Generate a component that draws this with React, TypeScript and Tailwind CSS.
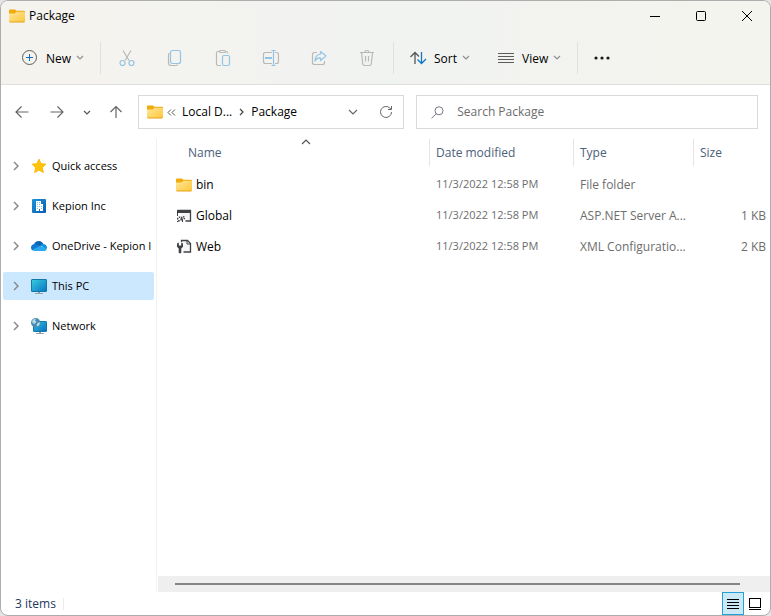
import React, { useState } from "react";

const crumbs = ["Local D...", "Package"];

const places = [
    { name: "Quick access", icon: <StarIcon /> },
    { name: "Kepion Inc", icon: <CompanyIcon /> },
    { name: "OneDrive - Kepion I", icon: <CloudIcon /> },
    { name: "This PC", icon: <MonitorIcon /> },
    { name: "Network", icon: <NetworkIcon /> },
];

const files = [
    { name: "bin", date: "11/3/2022 12:58 PM", type: "File folder", size: "", icon: <FolderIcon /> },
    { name: "Global", date: "11/3/2022 12:58 PM", type: "ASP.NET Server A...", size: "1 KB", icon: <ServerFileIcon /> },
    { name: "Web", date: "11/3/2022 12:58 PM", type: "XML Configuratio...", size: "2 KB", icon: <ConfigFileIcon /> },
];

function FolderIcon() {
    return (
        <svg width="16" height="14" viewBox="0 0 16 14" className="shrink-0">
            <defs>
                <linearGradient id="folder" x1="0" y1="0" x2="1" y2="1">
                    <stop offset="0" stopColor="#ffe79a" />
                    <stop offset="1" stopColor="#fdc73a" />
                </linearGradient>
            </defs>
            <path d="M0 1.2Q0 .5.8.5H6l1.4 1.3H14.8q1.2 0 1.2 1V7H0z" fill="#f0ab0c" />
            <path d="M0 4.4H5.8L7.4 2.8H15q1 0 1 .9V12.2q0 .8-.9.8H.9Q0 13 0 12.2z" fill="url(#folder)" />
            <path d="M.1 12.4H15.9q-.2 1-1 1H1.1q-.8 0-1-1z" fill="#e6a117" />
        </svg>
    );
}

function StarIcon() {
    return (
        <svg width="16" height="16" viewBox="0 0 16 16" className="shrink-0">
            <path d="M8 1.2l2 4.500 4.900.5-3.600 3.400 1 4.900L8 12.100l-4.300 2.400 1-4.900L1.100 6.200 6 5.700z" fill="#ffc50b" stroke="#fbb80a" strokeWidth="1" strokeLinejoin="round" />
        </svg>
    );
}

function CompanyIcon() {
    return (
        <svg width="16" height="16" viewBox="0 0 16 16" className="shrink-0">
            <defs>
                <linearGradient id="company" x1="0" y1="0" x2="1" y2="1">
                    <stop offset="0" stopColor="#1d94dd" />
                    <stop offset="1" stopColor="#0a5cb0" />
                </linearGradient>
            </defs>
            <rect x="1" y="1" width="14" height="14" rx="1" fill="url(#company)" />
            <path d="M5 3h5v3h2v7H9v-2H8v2H5z" fill="#fff" />
            <path d="M6 4h1v1H6zM8 4h1v1H8zM6 6h1v1H6zM8 6h1v1H8zM6 8h1v1H6zM8 8h1v1H8zM10 8h1v1h-1zM6 10h1v1H6zM10 10h1v1h-1z" fill="#8cc3e8" />
        </svg>
    );
}

function CloudIcon() {
    return (
        <svg width="16" height="16" viewBox="0 0 16 16" className="shrink-0">
            <path d="M3 6.200C4 3.800 6 2.800 8 2.900c2 .1 3.600 1.300 4.300 3.100L9 9z" fill="#0a64b5" />
            <path d="M3.200 6C1.200 6.200 0 7.700 0 9.500c0 1.200.5 2.100 1.300 2.700L9.500 8.500 6.500 6.600C5.500 6 4.300 5.800 3.200 6z" fill="#1078d0" />
            <path d="M12.300 6c-1.300-.1-2.300.4-3.100 1.100L14.800 11.500 16 10.300C16.300 8 14.600 6.100 12.300 6z" fill="#1490df" />
            <path d="M1.300 12.200L9 7.700l6.700 3.200c-.4 1.300-1.400 2.100-2.900 2.100H3.700c-1 0-1.800-.3-2.400-.8z" fill="#2aa8ee" />
        </svg>
    );
}

function MonitorIcon() {
    return (
        <svg width="16" height="16" viewBox="0 0 16 16" className="shrink-0">
            <defs>
                <linearGradient id="screen" x1="0" y1="0" x2="1" y2="1">
                    <stop offset="0" stopColor="#35d0dc" />
                    <stop offset="1" stopColor="#0c72c6" />
                </linearGradient>
            </defs>
            <path d="M7 13h2v2H7z" fill="#8f9aa3" />
            <path d="M4 15h8v1H4z" fill="#98a3ac" />
            <rect x=".5" y="1.500" width="15" height="12" rx=".5" fill="url(#screen)" stroke="#1479a8" />
        </svg>
    );
}

function NetworkIcon() {
    return (
        <svg width="16" height="16" viewBox="0 0 16 16" className="shrink-0">
            <defs>
                <linearGradient id="netscreen" x1="0" y1="0" x2="1" y2="1">
                    <stop offset="0" stopColor="#2fc4dd" />
                    <stop offset="1" stopColor="#0c6cc0" />
                </linearGradient>
            </defs>
            <path d="M8 13h2v2H8z" fill="#8f9aa3" />
            <path d="M5 15h8v1H5z" fill="#98a3ac" />
            <rect x="2.500" y="3.500" width="13" height="10" rx=".5" fill="url(#netscreen)" stroke="#1479a8" />
            <circle cx="4.700" cy="4.700" r="4.700" fill="#4a8db3" />
            <path d="M1.200 2.800Q3 .6 5 .5L4 2.500 5.500 3.600 3.500 6 1.500 5zM6.500 5l2.500-.8Q9 7 6.800 8.500L5.500 7z" fill="#b9d9e6" />
        </svg>
    );
}

function ServerFileIcon() {
    return (
        <svg width="16" height="16" viewBox="0 0 16 16" className="shrink-0">
            <path d="M1.500 2.500h13v10.500H9.500" fill="#f5f5f5" stroke="#3f4144" strokeWidth="1.300" />
            <path d="M1 2h14v3H1z" fill="#3f4144" />
            <path d="M1.500 4v4" stroke="#3f4144" />
            <circle cx="3.500" cy="11" r="1.800" fill="none" stroke="#3f4144" strokeWidth="1.500" strokeDasharray="1.500 .8" />
            <circle cx="7" cy="10" r="1.400" fill="none" stroke="#3f4144" strokeWidth="1.400" strokeDasharray="1.300 .7" />
            <path d="M6.500 12v2M1 13.500h1.500" stroke="#3f4144" />
        </svg>
    );
}

function ConfigFileIcon() {
    return (
        <svg width="16" height="16" viewBox="0 0 16 16" className="shrink-0">
            <path d="M5.500 3V1.500h6l3 3v8.500H7.500" fill="#f5f5f5" stroke="#3f4144" strokeWidth="1.300" />
            <path d="M11 1.500V5h3.500" fill="none" stroke="#3f4144" />
            <path d="M1 4.500L2.800 3.500v3h2.400v-3L7 4.500v3.300L5.300 9.500v4.300q-1.300 1-2.600 0V9.500L1 7.800z" fill="#3f4144" />
        </svg>
    );
}

function Chevron({ className, d = "M1 1l3 3 3-3", width = 8, height = 5 }: { className?: string; d?: string; width?: number; height?: number }) {
    return (
        <svg width={width} height={height} viewBox={`0 0 ${width} ${height}`} className={className} fill="none" stroke="currentColor" strokeWidth="1.200">
            <path d={d} />
        </svg>
    );
}

function ToolButton({ label, children }: { label: string; children: React.ReactNode }) {
    return (
        <button aria-label={label} className="flex h-10 w-12 items-center justify-center">
            <svg width="18" height="18" viewBox="0 0 18 18" fill="none" stroke="#b9b9b8" strokeWidth="1.200">{children}</svg>
        </button>
    );
}

function Divider() {
    return <div className="h-8 w-px bg-[#e0e1df]" />;
}

function TitleBar() {
    return (
        <div className="flex h-[29px] items-center">
            <div className="flex flex-1 items-center gap-1 pl-2">
                <FolderIcon />
                <h1>Package</h1>
            </div>
            <button aria-label="Minimize" className="flex h-full w-[46px] items-center justify-center">
                <svg width="12" height="12" viewBox="0 0 12 12" stroke="#000"><path d="M1 6.500h10" /></svg>
            </button>
            <button aria-label="Maximize" className="flex h-full w-[46px] items-center justify-center">
                <svg width="12" height="12" viewBox="0 0 12 12" fill="none" stroke="#000"><rect x="1.500" y="1.500" width="9" height="9" rx="1" /></svg>
            </button>
            <button aria-label="Close" className="flex h-full w-[46px] items-center justify-center">
                <svg width="12" height="12" viewBox="0 0 12 12" stroke="#000"><path d="M1 1l10 10M11 1L1 11" /></svg>
            </button>
        </div>
    );
}

function Toolbar() {
    return (
        <div className="flex h-[54px] items-center pt-px">
            <button className="flex h-10 w-[99px] items-center pl-5">
                <svg width="17" height="17" viewBox="0 0 17 17" fill="none">
                    <circle cx="8.500" cy="8.500" r="7" stroke="#5d5d5d" />
                    <path d="M8.500 5v7M5 8.500h7" stroke="#0f6cbd" />
                </svg>
                <span className="mt-0.5 ml-2">New</span>
                <Chevron className="ml-[5px] text-[#8f8f8f]" />
            </button>
            <Divider />
            <div className="mx-0.5 flex">
                <ToolButton label="Cut">
                    <path d="M5 1.500l6 10M13 1.500l-6 10" />
                    <circle cx="4.500" cy="14" r="2.500" stroke="#92c4e6" />
                    <circle cx="13.500" cy="14" r="2.500" stroke="#92c4e6" />
                </ToolButton>
                <ToolButton label="Copy">
                    <path d="M3.500 4Q2.500 4.500 2.500 6v8q0 2.500 2.500 2.500h5q1.300 0 1.800-1" />
                    <rect x="4.500" y="1.500" width="10" height="13" rx="2" stroke="#92c4e6" />
                </ToolButton>
                <ToolButton label="Paste">
                    <path d="M6 2.500H4Q2.500 2.500 2.500 4v11q0 1.500 1.500 1.500h3M11 2.500h1q1.500 0 1.500 1.500v.5" />
                    <rect x="5.500" y="1.500" width="6" height="2" rx="1" />
                    <rect x="8.500" y="6.500" width="7" height="10" rx="1.500" stroke="#92c4e6" />
                </ToolButton>
                <ToolButton label="Rename">
                    <path d="M10 3.500H3.500q-2 0-2 2v7q0 2 2 2H10M13 3.500h1.500q2 0 2 2v7q0 2-2 2H13" />
                    <path d="M9.500 1.500h4M11.500 1.500v15M9.500 16.500h4" stroke="#92c4e6" />
                    <path d="M3 9h7" stroke="#92c4e6" strokeWidth="2" />
                </ToolButton>
                <ToolButton label="Share">
                    <path d="M7 3.500H4.500q-2 0-2 2v8q0 2 2 2h8q2 0 2-2V12" />
                    <path d="M10.500 2.500l5.500 4.500-5.500 4.500V9Q7 8.500 5 12q0-6 5.500-7z" stroke="#92c4e6" strokeLinejoin="round" />
                </ToolButton>
                <ToolButton label="Delete">
                    <path d="M2 3.500h14M7 3.500Q7 1.500 9 1.500t2 2M3.500 3.500l1.200 11.300q.2 1.700 2 1.700h4.600q1.800 0 2-1.700L14.500 3.500M7.500 7v5.500M10.500 7v5.500" />
                </ToolButton>
            </div>
            <Divider />
            <button className="flex h-10 w-[88px] items-center pl-4">
                <svg width="17" height="16" viewBox="0 0 17 16" fill="none" strokeWidth="1.300">
                    <path d="M5 14V2.500M.5 7L5 2.500 9 6.500" stroke="#555" />
                    <path d="M11.500 2v11.500M7.500 9.500l4 4 4.500-4.500" stroke="#1377c8" />
                </svg>
                <span className="mt-0.5 ml-[7px]">Sort</span>
                <Chevron className="ml-[5px] text-[#8f8f8f]" />
            </button>
            <button className="flex h-10 w-[95px] items-center pl-4">
                <svg width="16" height="12" viewBox="0 0 16 12" stroke="#5c5c5c"><path d="M0 1.500h16M0 4.500h16M0 7.500h16M0 10.500h16" /></svg>
                <span className="mt-0.5 ml-2">View</span>
                <Chevron className="ml-[5px] text-[#8f8f8f]" />
            </button>
            <Divider />
            <button aria-label="See more" className="flex h-10 w-12 items-center justify-center">
                <svg width="18" height="4" viewBox="0 0 18 4" fill="#1a1a1a">
                    <circle cx="3" cy="2" r="1.600" /><circle cx="9" cy="2" r="1.600" /><circle cx="15" cy="2" r="1.600" />
                </svg>
            </button>
        </div>
    );
}

function AddressBar() {
    const [search, setSearch] = useState("");

    return (
        <div className="flex items-center py-[10px] pr-3 pl-3.5">
            <button aria-label="Back">
                <svg width="14" height="14" viewBox="0 0 14 14" fill="none" stroke="#666" strokeWidth="1.200"><path d="M13.500 7H1.500M6.500 1.500L1 7l5.500 5.500" /></svg>
            </button>
            <button aria-label="Forward" className="ml-[21px]">
                <svg width="14" height="14" viewBox="0 0 14 14" fill="none" stroke="#666" strokeWidth="1.200"><path d="M.5 7h12M7.500 1.500L13 7l-5.500 5.500" /></svg>
            </button>
            <button aria-label="Recent locations" className="ml-[19px]">
                <Chevron className="text-[#555]" />
            </button>
            <button aria-label="Up" className="ml-[18px]">
                <svg width="14" height="14" viewBox="0 0 14 14" fill="none" stroke="#666" strokeWidth="1.200"><path d="M7 13V1.500M1.500 7L7 1.500 12.500 7" /></svg>
            </button>
            <nav className="ml-[15px] flex h-[34px] flex-7 items-center border border-[#d9d9d9]">
                <span className="ml-2 shrink-0"><FolderIcon /></span>
                <svg width="9" height="7" viewBox="0 0 9 7" className="ml-1 shrink-0" fill="none" stroke="#555"><path d="M4 .5l-3 3 3 3M8 .5l-3 3 3 3" /></svg>
                <a href="#" className="ml-1.5 whitespace-nowrap">{crumbs[0]}</a>
                <Chevron width={5} height={8} d="M1 1l3 3-3 3" className="mx-[7px] shrink-0 text-[#444]" />
                <a href="#" className="flex-1">{crumbs[1]}</a>
                <button aria-label="Previous locations">
                    <Chevron width={10} height={6} d="M1 1l4 4 4-4" className="text-[#666]" />
                </button>
                <button aria-label="Refresh" className="mr-2.5 ml-[21px]">
                    <svg width="14" height="14" viewBox="0 0 14 14" fill="none" stroke="#666"><path d="M12.500 7A5.500 5.500 0 1 1 10.800 3L12 4.200M12.500 1v3.500H9" /></svg>
                </button>
            </nav>
            <label className="ml-3 flex h-[34px] flex-9 items-center border border-[#d9d9d9]">
                <svg width="13" height="13" viewBox="0 0 13 13" className="ml-3.5 shrink-0" fill="none" stroke="#7d7486"><circle cx="8" cy="4.800" r="4" /><path d="M5.200 7.700L.5 12.400" /></svg>
                <input
                    aria-label="Search Package"
                    placeholder="Search Package"
                    className="ml-[13px] min-w-0 flex-1 outline-none placeholder:text-[#6b6b6b]"
                    value={search}
                    onChange={(event) => setSearch(event.target.value)}
                />
            </label>
        </div>
    );
}

function Sidebar({ selected, onSelect }: { selected: string; onSelect: (name: string) => void }) {
    return (
        <nav className="flex w-[156px] shrink-0 flex-col gap-3 border-r border-[#f1f1f1] pt-[13px] pr-0.5 pl-0.5 text-[11px]">
            {places.map((place) => (
                <a
                    key={place.name}
                    href="#"
                    onClick={() => onSelect(place.name)}
                    className={`flex h-7 items-center overflow-hidden rounded-xs pl-2.5 whitespace-nowrap ${place.name === selected ? "bg-[#cce8ff]" : ""}`}
                >
                    <svg width="6" height="10" viewBox="0 0 6 10" className="mr-3 shrink-0" fill="none" stroke="#8a8a8a" strokeWidth="1.500"><path d="M1 1l4 4-4 4" /></svg>
                    {place.icon}
                    <span className="ml-[5px]">{place.name}</span>
                </a>
            ))}
        </nav>
    );
}

function FileTable() {
    return (
        <table className="w-full table-fixed text-left text-[#6d6d6d]">
            <thead className="text-[#4c607a]">
                <tr className="h-[30px] align-top">
                    <th className="w-[272px] p-0 font-normal">
                        <div className="flex h-[27px] items-center pl-[31px]">
                            <button>Name</button>
                            <Chevron width={10} height={6} d="M1 5l4-4 4 4" className="mb-[21px] ml-[79px] text-[#555]" />
                        </div>
                    </th>
                    <th className="w-36 p-0 font-normal">
                        <div className="flex h-[27px] items-center border-l border-[#e5e5e5] pl-1.5"><button>Date modified</button></div>
                    </th>
                    <th className="w-[120px] p-0 font-normal">
                        <div className="flex h-[27px] items-center border-l border-[#e5e5e5] pl-1.5"><button>Type</button></div>
                    </th>
                    <th className="p-0 font-normal">
                        <div className="flex h-[27px] items-center border-l border-[#e5e5e5] pl-1.5"><button>Size</button></div>
                    </th>
                </tr>
            </thead>
            <tbody>
                {files.map((file) => (
                    <tr key={file.name} className="h-[31px]">
                        <td className="p-0 text-black">
                            <div className="flex items-center gap-1 pl-[19px]">
                                {file.icon}
                                <span>{file.name}</span>
                            </div>
                        </td>
                        <td className="p-0 pl-[7px] text-[11px] whitespace-nowrap">{file.date}</td>
                        <td className="p-0 pl-[7px] whitespace-nowrap">{file.type}</td>
                        <td className="p-0 pr-1 text-right whitespace-nowrap">{file.size}</td>
                    </tr>
                ))}
            </tbody>
        </table>
    );
}

function StatusBar() {
    return (
        <footer className="flex h-[23px] items-center pl-3.5 text-[#1e395b]">
            <span>{files.length} items</span>
            <div className="ml-[7px] h-3 w-px bg-[#ececec]" />
            <div className="flex-1" />
            <button aria-label="Details view" className="flex h-[23px] w-[22px] items-center justify-center border border-[#26a0da] bg-[#cbe8f6]">
                <svg width="12" height="12" viewBox="0 0 12 12" stroke="#000"><path d="M0 1.500h12M0 4.500h12M0 7.500h12M0 10.500h12" /></svg>
            </button>
            <button aria-label="Large icons view" className="mr-2 ml-1 flex h-[23px] w-[14px] items-center justify-center">
                <svg width="12" height="12" viewBox="0 0 12 12" fill="none" stroke="#000"><rect x=".5" y=".5" width="11" height="9" /><path d="M0 11.500h12" /></svg>
            </button>
        </footer>
    );
}

export default function App() {
    const [selected, setSelected] = useState("This PC");

    return (
        <div className="min-h-screen bg-[#e4e4e4] font-['Open_Sans','Noto_Sans',sans-serif] text-xs text-black">
            <div className="flex min-h-screen flex-col overflow-hidden rounded-lg border border-[#adadad] bg-white">
                <header className="border-b border-[#dfdfdd] bg-linear-to-r from-[#f5f3ee] via-[#f1f3f1] to-[#f4f4ee]">
                    <TitleBar />
                    <Toolbar />
                </header>
                <AddressBar />
                <div className="flex flex-1">
                    <Sidebar selected={selected} onSelect={setSelected} />
                    <main className="flex min-w-0 flex-1 flex-col">
                        <FileTable />
                        <div className="flex-1" />
                        <div className="ml-px flex h-4 items-center bg-[#efefef] pr-[30px] pl-[17px]">
                            <div className="h-0.5 flex-1 bg-[#858585]" />
                        </div>
                    </main>
                </div>
                <StatusBar />
            </div>
        </div>
    );
}
